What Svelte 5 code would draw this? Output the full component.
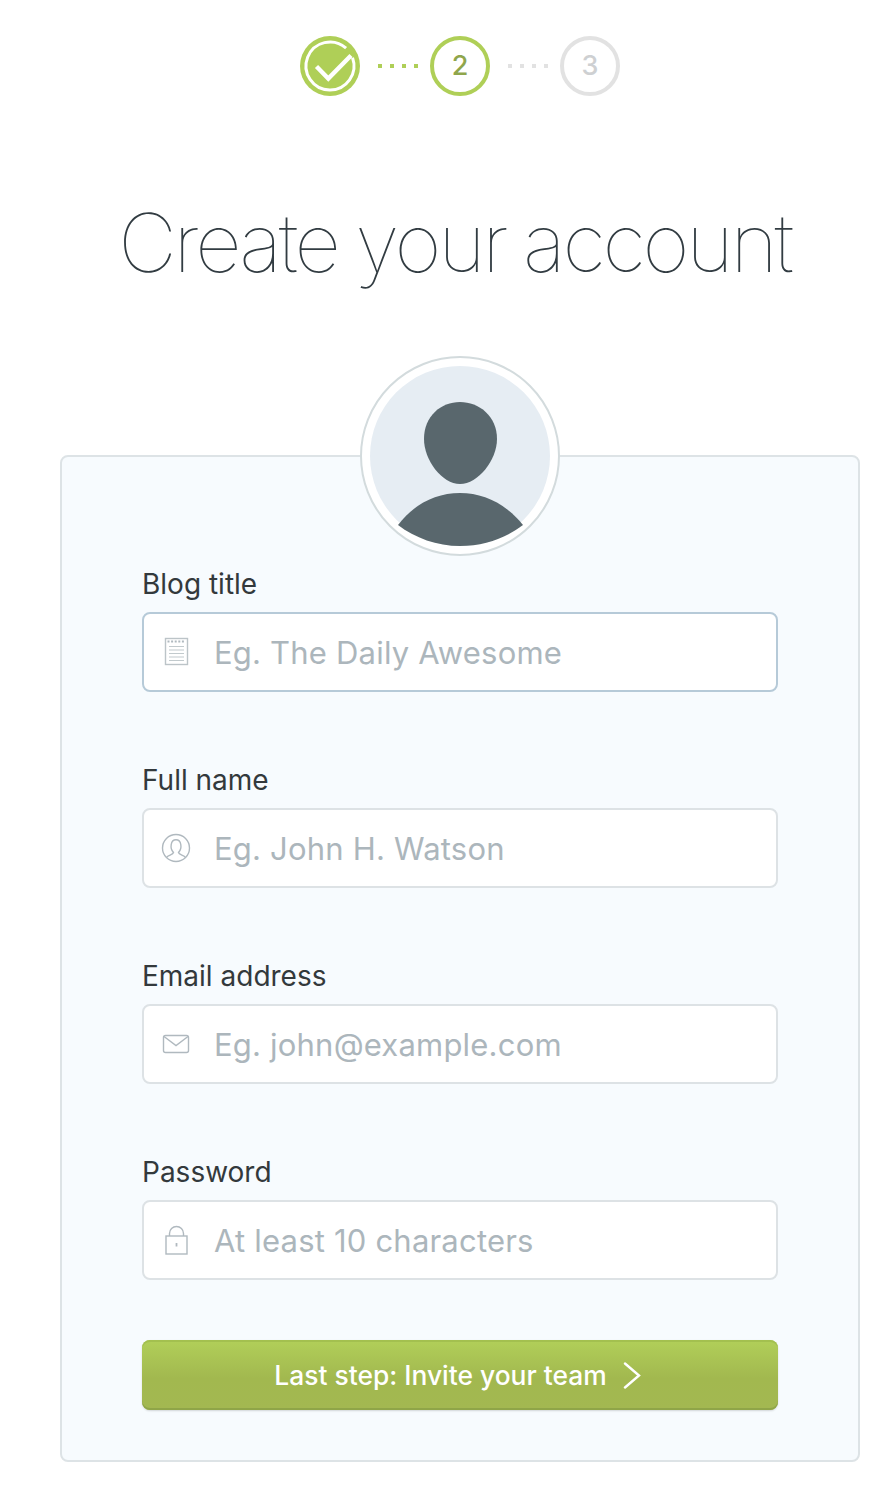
<script>
  const fields = [
    { label: 'Blog title', placeholder: 'Eg. The Daily Awesome', icon: 'note', focus: true },
    { label: 'Full name', placeholder: 'Eg. John H. Watson', icon: 'user' },
    { label: 'Email address', placeholder: 'Eg. john@example.com', icon: 'mail' },
    { label: 'Password', placeholder: 'At least 10 characters', icon: 'lock' }
  ];
</script>

<div class="page">
  <div class="stepper">
    <div class="step done">
      <svg width="60" height="60" viewBox="0 0 60 60">
        <circle cx="30" cy="30" r="30" fill="#afcf57" />
        <path d="M52.55 21.8 A24 24 0 1 1 46.06 12.16" fill="none" stroke="#fff" stroke-width="3" />
        <path d="M16.5 30.5 L28.3 42.5 L51 19.5" fill="none" stroke="#fff" stroke-width="4.4" />
      </svg>
    </div>
    <div class="dots on"><i></i><i></i><i></i><i></i></div>
    <div class="step current">2</div>
    <div class="dots"><i></i><i></i><i></i><i></i></div>
    <div class="step todo">3</div>
  </div>

  <h1>Create your account</h1>

  <form class="card">
    <div class="avatar">
      <svg width="180" height="180" viewBox="0 0 180 180">
        <circle cx="90" cy="90" r="90" fill="#e6edf3" />
        <path d="M90 36 C109 36 127 50 127 73 C127 94 108 118 90 118 C72 118 54 94 54 73 C54 50 71 36 90 36 Z" fill="#59676d" />
        <path d="M28 159 C44 138 66 127 90 127 C114 127 136 138 153 159 C136 172 114 180 90 180 C67 180 45 172 28 159 Z" fill="#59676d" />
      </svg>
    </div>

    {#each fields as f}
      <div class="field">
        <div class="label">{f.label}</div>
        <div class="input" class:focus={f.focus}>
          <svg class="icon" width="30" height="30" viewBox="0 0 30 30" fill="none" stroke="#b0b9bf" stroke-width="1.4">
            {#if f.icon === 'note'}
              <rect x="4.5" y="1.5" width="22" height="26" stroke="#bcc4c8" />
              <path d="M6.5 4.5H24.5" stroke-width="2" stroke-dasharray="2 1.6" />
              <path d="M8 9.5H23M8 13H23M8 16.5H23M8 20H23M8 23.5H23" stroke="#c2cacd" stroke-width="1.2" />
            {:else if f.icon === 'user'}
              <circle cx="15" cy="15" r="13.5" />
              <path d="M5.5 24.5 C7 22 12 22 12.5 19.5 C10.5 17.5 9.8 14 10.2 11.5 C10.8 8 13 6.8 15 6.8 C17 6.8 19.2 8 19.8 11.5 C20.2 14 19.5 17.5 17.5 19.5 C18 22 23 22 24.5 24.5" />
            {:else if f.icon === 'mail'}
              <rect x="2.5" y="6.5" width="25" height="17" rx="2" />
              <path d="M3 7.5 L15 16.5 L27 7.5" />
            {:else}
              <rect x="5" y="11" width="21" height="18" />
              <path d="M8.5 11 V8.5 A7 7 0 0 1 22.5 8.5 V11" />
              <path d="M15.5 18 V21.5" stroke-width="1.8" />
            {/if}
          </svg>
          <span class="ph">{f.placeholder}</span>
        </div>
      </div>
    {/each}

    <button type="button" class="cta">
      <span>Last step: Invite your team</span>
      <svg width="18" height="27" viewBox="0 0 18 27" fill="none" stroke="#fff" stroke-width="2.4" stroke-linecap="round">
        <path d="M2 1.5 L16 13.5 L2 25.5" />
      </svg>
    </button>
  </form>
</div>

<style>
  :global(body) {
    margin: 0;
    background: #fff;
  }
  .page {
    width: 890px;
    height: 1502px;
    box-sizing: border-box;
    padding: 36px 30px 0 60px;
    font-family: Inter, "Liberation Sans", sans-serif;
    overflow: hidden;
  }
  .stepper {
    display: flex;
    justify-content: center;
    align-items: center;
    height: 60px;
  }
  .step {
    width: 60px;
    height: 60px;
    box-sizing: border-box;
    border-radius: 50%;
    display: flex;
    align-items: center;
    justify-content: center;
    font-size: 27px;
    font-weight: 500;
    padding-bottom: 2px;
  }
  .step.done { padding: 0; }
  .step svg { display: block; }
  .current { border: 4px solid #afcf57; color: #8fa64c; }
  .todo { border: 4px solid #e2e2e2; color: #ced0d2; }
  .dots {
    width: 70px;
    box-sizing: border-box;
    padding-left: 6px;
    display: flex;
    justify-content: center;
    gap: 8px;
  }
  .dots i {
    width: 4px;
    height: 4px;
    background: #e2e2e2;
  }
  .dots.on i { background: #afcf57; }
  h1 {
    margin: 98px 0 0;
    height: 261px;
    padding-right: 11px;
    font-size: 81px;
    line-height: 98px;
    font-weight: 100;
    letter-spacing: -3.2px;
    word-spacing: -2px;
    color: #323c42;
    text-align: center;
    white-space: nowrap;
  }
  .card {
    box-sizing: border-box;
    height: 1007px;
    border: 2px solid #dde3e6;
    border-radius: 8px;
    background: #f7fbfe;
    padding: 0 80px;
    display: flex;
    flex-direction: column;
  }
  .avatar {
    align-self: center;
    margin-top: -101px;
    width: 200px;
    height: 200px;
    box-sizing: border-box;
    border: 2px solid #d3dbdd;
    border-radius: 50%;
    background: #fff;
    display: flex;
    align-items: center;
    justify-content: center;
  }
  .avatar svg { display: block; }
  .field {
    height: 196px;
    flex: none;
  }
  .label {
    font-size: 28px;
    line-height: 56px;
    color: #33393c;
    white-space: nowrap;
  }
  .input {
    height: 80px;
    box-sizing: border-box;
    border: 2px solid #dde2e5;
    border-radius: 8px;
    background: #fff;
    display: flex;
    align-items: center;
    padding-left: 17px;
    gap: 23px;
  }
  .input.focus { border-color: #b6cad8; }
  .icon { flex: none; display: block; }
  .ph {
    font-size: 31px;
    letter-spacing: 0.2px;
    color: #acb6bc;
    white-space: nowrap;
  }
  .cta {
    height: 70px;
    flex: none;
    border: 0;
    border-radius: 8px;
    padding: 0 5px 0 0;
    display: flex;
    align-items: center;
    justify-content: center;
    gap: 16px;
    font-family: inherit;
    font-size: 26.4px;
    font-weight: 500;
    color: #fff;
    background: linear-gradient(#b1cf59, #a2b84f 55%, #a3b851);
    box-shadow: inset 0 2px 0 #a3c04f, inset 0 -2px 0 #8fa548, 0 1px 2px rgba(0,0,0,0.15);
  }
</style>
